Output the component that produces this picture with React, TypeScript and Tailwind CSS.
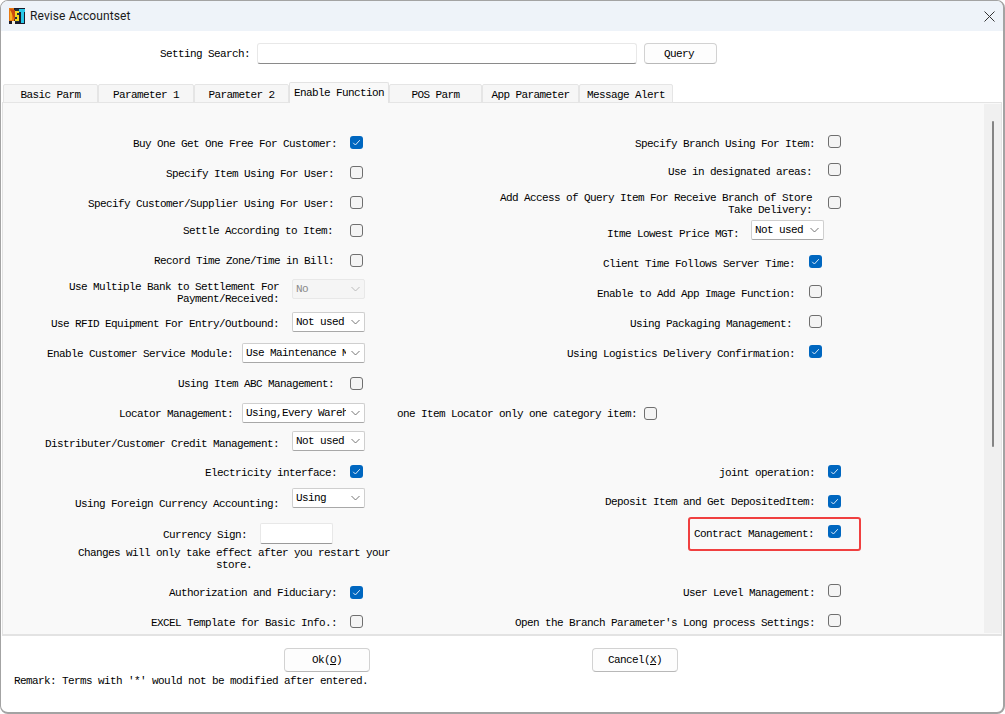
import React from "react";

const mono = "font-['Liberation_Mono',monospace] text-[11px] tracking-[-0.6px] leading-[12px] text-black";

function Logo() {
  return (
    <svg width="16" height="16" viewBox="0 0 16 16" className="shrink-0">
      <rect width="16" height="16" fill="#1a1a2a" />
      <rect x="0" y="0" width="5" height="13" fill="#e87a10" />
      <rect x="1" y="3" width="2" height="9" fill="#f5b020" />
      <path d="M1 1 L6 13 L6 2 Z" fill="#c84a10" />
      <rect x="6" y="1" width="4" height="13" fill="#203040" />
      <path d="M6 3h4v2H8v2h2v6H6v-2h2V9H6z" fill="#f2d820" />
      <rect x="10" y="1" width="6" height="3" fill="#28c8e8" />
      <rect x="12" y="1" width="3" height="14" fill="#28c8e8" />
      <rect x="3" y="13" width="3" height="3" fill="#f4f0e0" />
    </svg>
  );
}

function Check({ on }: { on?: boolean }) {
  if (on)
    return (
      <span className="w-[13px] h-[13px] rounded-[3px] bg-[#0067c0] flex items-center justify-center shrink-0">
        <svg width="9" height="9" viewBox="0 0 9 9" fill="none">
          <path d="M1.2 4.8 L3.4 7 L7.8 2.2" stroke="#dbe9f7" strokeWidth="1" />
        </svg>
      </span>
    );
  return <span className="w-[13px] h-[13px] rounded-[3px] bg-[#f4f4f4] border border-[#6f6f6f] shrink-0" />;
}

function Select({ text, wide, disabled }: { text: string; wide?: boolean; disabled?: boolean }) {
  return (
    <span
      className={`${wide ? "w-[123px]" : "w-[73px]"} h-[20px] rounded-[2px] border flex items-center pl-[3px] shrink-0 ${
        disabled ? "bg-[#f5f5f5] border-[#e8e8e8]" : "bg-white border-[#cfcfcf] border-b-[#a8a8a8]"
      }`}
    >
      <span className={`flex-1 overflow-hidden whitespace-nowrap mr-[5px] ${mono} ${disabled ? "!text-[#8a8a8a]" : ""}`}>{text}</span>
      <svg width="9" height="6" viewBox="0 0 9 6" fill="none" className="shrink-0 mr-[4px]">
        <path d="M0.5 1 L4.5 5 L8.5 1" stroke={disabled ? "#b5b5b5" : "#666"} strokeWidth="0.9" />
      </svg>
    </span>
  );
}

type R = { cls: string; gap: string; pr?: string; lab?: string; label: React.ReactNode; ctl: React.ReactNode };

const leftRows: R[] = [
  { cls: "mt-[29px]", gap: "gap-[13px]", lab: "mt-[4px]", label: "Buy One Get One Free For Customer:", ctl: <Check on /> },
  { cls: "mt-[10px]", gap: "gap-[16px]", lab: "mt-[4px]", label: "Specify Item Using For User:", ctl: <Check /> },
  { cls: "mt-[10px]", gap: "gap-[16px]", lab: "mt-[4px]", label: "Specify Customer/Supplier Using For User:", ctl: <Check /> },
  { cls: "mt-[8px]", gap: "gap-[17px]", label: "Settle According to Item:", ctl: <Check /> },
  { cls: "mt-[10px]", gap: "gap-[16px]", label: "Record Time Zone/Time in Bill:", ctl: <Check /> },
  { cls: "mt-[9px]", gap: "gap-[13px]", pr: "pr-0", lab: "mt-[8px]", label: <>Use Multiple Bank to Settlement For<br />Payment/Received:</>, ctl: <Select text="No" disabled /> },
  { cls: "mt-[13px]", gap: "gap-[13px]", pr: "pr-0", lab: "mt-[4px]", label: "Use RFID Equipment For Entry/Outbound:", ctl: <Select text="Not used" /> },
  { cls: "mt-[11px]", gap: "gap-[9px]", pr: "pr-0", label: "Enable Customer Service Module:", ctl: <Select wide text="Use Maintenance Mode" /> },
  { cls: "mt-[10px]", gap: "gap-[16px]", label: "Using Item ABC Management:", ctl: <Check /> },
  { cls: "mt-[10px]", gap: "gap-[9px]", pr: "pr-0", label: "Locator Management:", ctl: <Select wide text="Using,Every Warehouse" /> },
  { cls: "mt-[8px]", gap: "gap-[13px]", pr: "pr-0", lab: "mt-[6px]", label: "Distributer/Customer Credit Management:", ctl: <Select text="Not used" /> },
  { cls: "mt-[10px]", gap: "gap-[13px]", lab: "mt-[4px]", label: "Electricity interface:", ctl: <Check on /> },
  { cls: "mt-[7px]", gap: "gap-[13px]", pr: "pr-0", lab: "mt-[12px]", label: "Using Foreign Currency Accounting:", ctl: <Select text="Using" /> },
];

const rightRows: R[] = [
  { cls: "mt-[28px]", pr: "pr-0", gap: "gap-[13px]", lab: "mt-[6px]", label: "Specify Branch Using For Item:", ctl: <Check /> },
  { cls: "mt-[8px]", pr: "pr-0", gap: "gap-[16px]", lab: "mt-[5px]", label: "Use in designated areas:", ctl: <Check /> },
  { cls: "mt-[13px]", pr: "pr-0", gap: "gap-[16px]", lab: "mt-[4px]", label: <>Add Access of Query Item For Receive Branch of Store<br />Take Delivery:</>, ctl: <Check /> },
  { cls: "mt-[8px]", pr: "pr-[17px]", gap: "gap-[12px]", lab: "mt-[8px]", label: "Itme Lowest Price MGT:", ctl: <Select text="Not used" /> },
  { cls: "mt-[11px]", pr: "pr-[19px]", gap: "gap-[14px]", lab: "mt-[6px]", label: "Client Time Follows Server Time:", ctl: <Check on /> },
  { cls: "mt-[10px]", pr: "pr-[19px]", gap: "gap-[14px]", lab: "mt-[6px]", label: "Enable to Add App Image Function:", ctl: <Check /> },
  { cls: "mt-[10px]", pr: "pr-[19px]", gap: "gap-[17px]", lab: "mt-[6px]", label: "Using Packaging Management:", ctl: <Check /> },
  { cls: "mt-[10px]", pr: "pr-[19px]", gap: "gap-[14px]", lab: "mt-[6px]", label: "Using Logistics Delivery Confirmation:", ctl: <Check on /> },
  { cls: "mt-[42px]", pr: "pr-[184px]", gap: "gap-[7px]", label: "one Item Locator only one category item:", ctl: <Check /> },
  { cls: "mt-[38px]", pr: "pr-0", gap: "gap-[13px]", lab: "mt-[4px]", label: "joint operation:", ctl: <Check on /> },
  { cls: "mt-[10px]", pr: "pr-0", gap: "gap-[13px]", label: "Deposit Item and Get DepositedItem:", ctl: <Check on /> },
  { cls: "mt-[10px]", pr: "pr-0", gap: "gap-[14px]", lab: "mt-[6px]", label: "Contract Management:", ctl: <Check on /> },
  { cls: "mt-[39px]", pr: "pr-0", gap: "gap-[13px]", lab: "mt-[6px]", label: "User Level Management:", ctl: <Check /> },
  { cls: "mt-[10px]", pr: "pr-0", gap: "gap-[13px]", lab: "mt-[6px]", label: "Open the Branch Parameter's Long process Settings:", ctl: <Check /> },
];

function Row({ cls, gap, label, ctl, pr = "pr-[2px]", lab = "mt-[2px]" }: R) {
  return (
    <div className={`flex justify-end items-center h-[20px] shrink-0 ${cls} ${gap} ${pr}`}>
      <span className={`text-right whitespace-nowrap ${lab} ${mono}`}>{label}</span>
      {ctl}
    </div>
  );
}

const tabs = [
  { t: "Basic Parm", w: "w-[95px]" },
  { t: "Parameter 1", w: "w-[96px]" },
  { t: "Parameter 2", w: "w-[95px]" },
  { t: "Enable Function", w: "w-[100px]", active: true },
  { t: "POS Parm", w: "w-[93px]" },
  { t: "App Parameter", w: "w-[97px]" },
  { t: "Message Alert", w: "w-[94px]" },
];

function Btn({ children, w, h }: { children: React.ReactNode; w: string; h: string }) {
  return (
    <button className={`${w} ${h} rounded-[4px] border border-[#d2d2d2] border-b-[#b8b8b8] bg-[#fdfdfd] flex items-center justify-center ${mono}`}>
      {children}
    </button>
  );
}

export default function App() {
  return (
    <div className="w-[1005px] h-[714px] bg-white rounded-[8px] border-l border-t border-r-2 border-b-2 border-[#a3a3a3] flex flex-col overflow-hidden">
      <div className="h-[30px] bg-[#eef3f9] flex items-center pl-[8px] pr-[8px] shrink-0">
        <Logo />
        <span className="ml-[5px] font-['Roboto',sans-serif] text-[12px] tracking-[0.1px] text-[#1a1a1a]">Revise Accountset</span>
        <svg width="11" height="11" viewBox="0 0 11 11" fill="none" className="ml-auto">
          <path d="M0.5 0.5 L10.5 10.5 M10.5 0.5 L0.5 10.5" stroke="#333" strokeWidth="1" />
        </svg>
      </div>

      <div className="flex items-center mt-[12px] pl-[159px] shrink-0">
        <span className={mono}>Setting Search:</span>
        <span className="ml-[7px] w-[380px] h-[21px] bg-white rounded-[3px] border border-[#e8e8e8] border-b-[#8a8a8a]" />
        <span className="ml-[7px]">
          <Btn w="w-[73px]" h="h-[21px]"><span className="mr-[3px]">Query</span></Btn>
        </span>
      </div>

      <div className="flex items-end h-[21px] mt-[18px] pl-[2px] mb-[-1px] relative z-10 shrink-0">
        {tabs.map((t) =>
          t.active ? (
            <div key={t.t} className={`${t.w} h-[21px] bg-[#f9f9f9] border border-b-0 border-[#e3e3e3] rounded-t-[2px] flex items-start pt-[4px] justify-center ${mono}`}>
              {t.t}
            </div>
          ) : (
            <div key={t.t} className={`${t.w} h-[19px] bg-[#f6f6f6] border border-[#e5e5e5] rounded-t-[2px] flex items-center justify-center pt-[3px] ${mono}`}>
              {t.t}
            </div>
          )
        )}
      </div>

      <div className="relative mx-[1px] h-[534px] bg-[#f9f9f9] border border-[#e3e3e3] border-b-2 flex overflow-hidden shrink-0">
        <div className="w-[362px] flex flex-col shrink-0">
          {leftRows.map((r, i) => (
            <Row key={i} {...r} />
          ))}
          <div className="flex justify-end items-center h-[20px] mt-[15px] w-[330px] shrink-0">
            <span className={`mt-[3px] ${mono}`}>Currency Sign:</span>
            <span className="ml-[13px] w-[73px] h-[21px] bg-white rounded-[2px] border border-[#e8e8e8] border-b-[#9a9a9a]" />
          </div>
          <div className={`mt-[4px] ml-[75px] w-[312px] shrink-0 text-center whitespace-nowrap ${mono}`}>
            Changes will only take effect after you restart your
            <br />
            store.
          </div>
          <Row cls="mt-[11px]" gap="gap-[13px]" label="Authorization and Fiduciary:" ctl={<Check on />} />
          <Row cls="mt-[9px]" gap="gap-[13px]" lab="mt-[4px]" label="EXCEL Template for Basic Info.:" ctl={<Check />} />
        </div>

        <div className="w-[476px] flex flex-col shrink-0">
          {rightRows.map((r, i) => (
            <Row key={i} {...r} />
          ))}
        </div>

        <div className="ml-auto w-[17px] mt-[1px] mb-[1px] bg-[#f0f0f0] flex justify-center shrink-0">
          <div className="w-[2px] h-[326px] mt-[17px] bg-[#858585] rounded-[1px]" />
        </div>

        <div className="absolute left-[685px] top-[414px] w-[173px] h-[34px] border-2 border-[#f04040] rounded-[3px] pointer-events-none" />
      </div>

      <div className="flex pl-[283px] mt-[12px] gap-[222px] shrink-0">
        <Btn w="w-[86px]" h="h-[24px]"><span>Ok(<u>O</u>)</span></Btn>
        <Btn w="w-[86px]" h="h-[24px]"><span>Cancel(<u>X</u>)</span></Btn>
      </div>
      <div className={`pl-[13px] mt-[3px] ${mono}`}>Remark: Terms with '*' would not be modified after entered.</div>
    </div>
  );
}
